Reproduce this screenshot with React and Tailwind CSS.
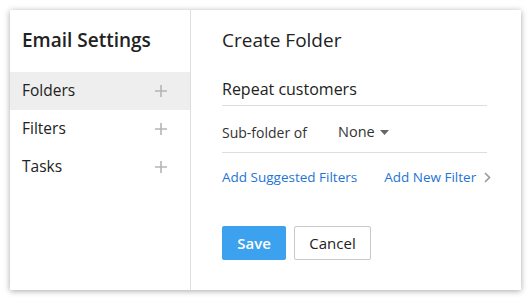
import React from 'react';

const menu = ['Folders', 'Filters', 'Tasks'];

const PlusIcon = () => (
  <svg width="12" height="12" viewBox="0 0 12 12" className="text-[#b5b5b5]">
    <path d="M6 0v12M0 6h12" stroke="currentColor" strokeWidth="1.6" />
  </svg>
);

const App = () => {
  return (
    <div className="w-[531px] h-[300px] bg-white pt-[10px] pl-[10px] font-['Open_Sans',sans-serif]">
      <div className="flex w-[511px] h-[280px] bg-white shadow-[0_1px_6px_rgba(0,0,0,0.35)]">
        {/* Sidebar */}
        <div className="w-[181px] shrink-0 border-r border-[#dedede]">
          <h2 className="h-[62px] pl-3 pt-[21px] text-[19px] font-semibold text-[#222] leading-none">Email Settings</h2>
          {menu.map((item, i) => (
            <div
              key={item}
              className={`flex items-center justify-between h-[38px] pl-3 pr-[23px] text-[15.5px] text-[#222] ${i === 0 ? 'bg-[#eeeeee]' : ''}`}
            >
              <span>{item}</span>
              <PlusIcon />
            </div>
          ))}
        </div>

        {/* Content */}
        <div className="flex-1 min-w-0 pl-[31px] pr-[34px] whitespace-nowrap">
          <h2 className="pt-[21px] text-[19px] text-[#222] leading-none">Create Folder</h2>
          <div className="mt-[26px] h-[30px] pt-[5px] border-b border-[#dedede] text-[16px] text-[#222] leading-none">
            Repeat customers
          </div>
          <div className="flex items-center h-[47px] pt-[6px] border-b border-[#dedede] text-[14px] text-[#333]">
            <span className="w-[116px]">Sub-folder of</span>
            <span className="text-[14.5px]">None</span>
            <svg width="9" height="5" viewBox="0 0 9 5" className="ml-[5px] mt-[1px]">
              <path d="M0 0h9L4.5 5z" fill="#666" />
            </svg>
          </div>
          <div className="flex items-center h-[48px] text-[13.5px] text-[#1d75d6]">
            <span>Add Suggested Filters</span>
            <span className="ml-[27px]">Add New Filter</span>
            <svg width="7" height="11" viewBox="0 0 7 11" className="ml-[8px] shrink-0">
              <path d="M1 1l4.5 4.5L1 10" stroke="#999" strokeWidth="1.6" fill="none" />
            </svg>
          </div>
          <div className="flex gap-2 mt-[25px]">
            <button className="w-[64px] h-[34px] rounded-[2px] bg-[#3ca1ef] text-white text-[15px] font-semibold">Save</button>
            <button className="w-[77px] h-[34px] rounded-[2px] border border-[#c8c8c8] text-[#222] text-[15px]">Cancel</button>
          </div>
        </div>
      </div>
    </div>
  );
};

export default App;
